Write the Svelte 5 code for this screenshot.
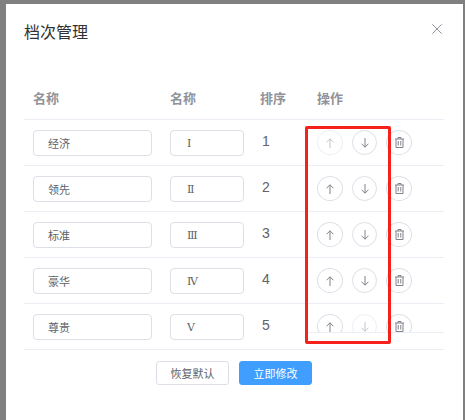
<script>
  const rows = [
    { name: '经济', level: 'Ⅰ', upOff: true },
    { name: '领先', level: 'Ⅱ' },
    { name: '标准', level: 'Ⅲ' },
    { name: '豪华', level: 'Ⅳ' },
    { name: '尊贵', level: 'Ⅴ', downOff: true }
  ];
</script>

<div class="page">
  <div class="modal">
    <header>
      <h2>档次管理</h2>
      <svg class="close" width="10" height="10" viewBox="0 0 10 10" aria-label="关闭"><path d="M.3.3l9.4 9.4M9.7.3L.3 9.7" /></svg>
    </header>
    <div class="table">
      <div class="row head">
        <div class="cell">名称</div>
        <div class="cell">名称</div>
        <div class="cell">排序</div>
        <div class="cell">操作</div>
      </div>
      {#each rows as r, i}
        <div class="row">
          <div class="cell"><input class="wide" value={r.name} readonly /></div>
          <div class="cell"><input class="narrow" value={r.level} readonly /></div>
          <div class="cell num"><span>{i + 1}</span></div>
          <div class="cell ops" class:clip={i === rows.length - 1}>
            <button class="circle a" class:off={r.upOff} aria-label="上移">
              <svg width="8" height="10" viewBox="0 0 8 10"><path d="M4 10V.8M.5 4.3L4 .8l3.5 3.5" /></svg>
            </button>
            <button class="circle b" class:off={r.downOff} aria-label="下移">
              <svg width="8" height="10" viewBox="0 0 8 10"><path d="M4 0v9.2M.5 5.7L4 9.2l3.5-3.5" /></svg>
            </button>
            <button class="circle a trash" aria-label="删除">
              <svg width="9" height="11" viewBox="0 0 9 11"><path d="M0 2h9M3 2V.5h3V2M1 2v8.5h7V2M3.2 4v4.5M5.8 4v4.5" /></svg>
            </button>
          </div>
        </div>
      {/each}
    </div>
    <footer>
      <button class="btn">恢复默认</button>
      <button class="btn primary">立即修改</button>
    </footer>
    <div class="mark"></div>
  </div>
</div>

<style>
  :global(body) { margin: 0; }
  .page {
    width: 465px;
    height: 420px;
    overflow: hidden;
    background: #808080;
    padding: 4px 2px 0 6px;
    box-sizing: border-box;
    font-family: "Noto Sans CJK SC", "Liberation Sans", sans-serif;
  }
  .modal {
    position: relative;
    height: 440px;
    background: #fff;
    padding: 0 19px 0 18px;
  }
  header {
    height: 78px;
    display: flex;
    justify-content: space-between;
    padding-top: 15px;
    box-sizing: border-box;
  }
  h2 {
    margin: 0;
    font-size: 16px;
    line-height: 24px;
    font-weight: 400;
    color: #303133;
  }
  .close {
    margin: 5px 2px 0 0;
    fill: none;
    stroke: #909399;
    stroke-width: 1;
  }
  .row {
    display: grid;
    grid-template-columns: 137px 90px 57px 136px;
    height: 46px;
    box-sizing: border-box;
    border-bottom: 1px solid #ebeef5;
  }
  .head {
    height: 38px;
    font-size: 13px;
    font-weight: 700;
    color: #909399;
    line-height: 32px;
  }
  .cell {
    padding-left: 9px;
  }
  input {
    display: block;
    height: 26px;
    margin-top: 10px;
    padding: 0 0 0 14px;
    box-sizing: border-box;
    border: 1px solid #dcdfe6;
    border-radius: 4px;
    font: 11px "Noto Sans CJK SC", "Liberation Sans", sans-serif;
    color: #606266;
    outline: none;
  }
  .wide { width: 119px; }
  .narrow {
    width: 74px;
    padding-left: 16px;
    font-family: "DejaVu Serif", "Noto Sans CJK SC", serif;
  }
  .num {
    font: 14px/42px "Liberation Sans", sans-serif;
    color: #606266;
  }
  .num span { padding-left: 2px; }
  .ops {
    display: flex;
    gap: 9px;
    padding-top: 10px;
    background: #fff;
  }
  .clip {
    height: 29px;
    overflow: hidden;
    box-sizing: border-box;
    border-bottom: 1px solid #ebeef5;
    margin-left: -2px;
    padding-left: 11px;
  }
  .circle {
    flex: none;
    height: 25px;
    padding: 0;
    display: flex;
    align-items: center;
    justify-content: center;
    background: #fff;
    border: 1px solid #dcdfe6;
    border-radius: 50%;
  }
  .a { width: 26px; }
  .b { width: 25px; }
  .circle svg {
    fill: none;
    stroke: #7f8289;
    stroke-width: 1;
  }
  .off { border-color: #ebeef5; }
  .off svg { stroke: #c0c4cc; }
  footer {
    display: flex;
    justify-content: flex-start;
    gap: 10px;
    padding: 11px 0 0 132px;
  }
  .btn {
    width: 73px;
    height: 24px;
    padding: 0;
    background: #fff;
    border: 1px solid #dcdfe6;
    border-radius: 3px;
    font: 11px "Noto Sans CJK SC", "Liberation Sans", sans-serif;
    color: #606266;
  }
  .primary {
    background: #409eff;
    border-color: #409eff;
    color: #fff;
  }
  .mark {
    position: absolute;
    left: 299px;
    top: 122px;
    width: 86px;
    height: 218px;
    box-sizing: border-box;
    border: 3px solid #f5211a;
    border-radius: 2px;
  }
</style>
